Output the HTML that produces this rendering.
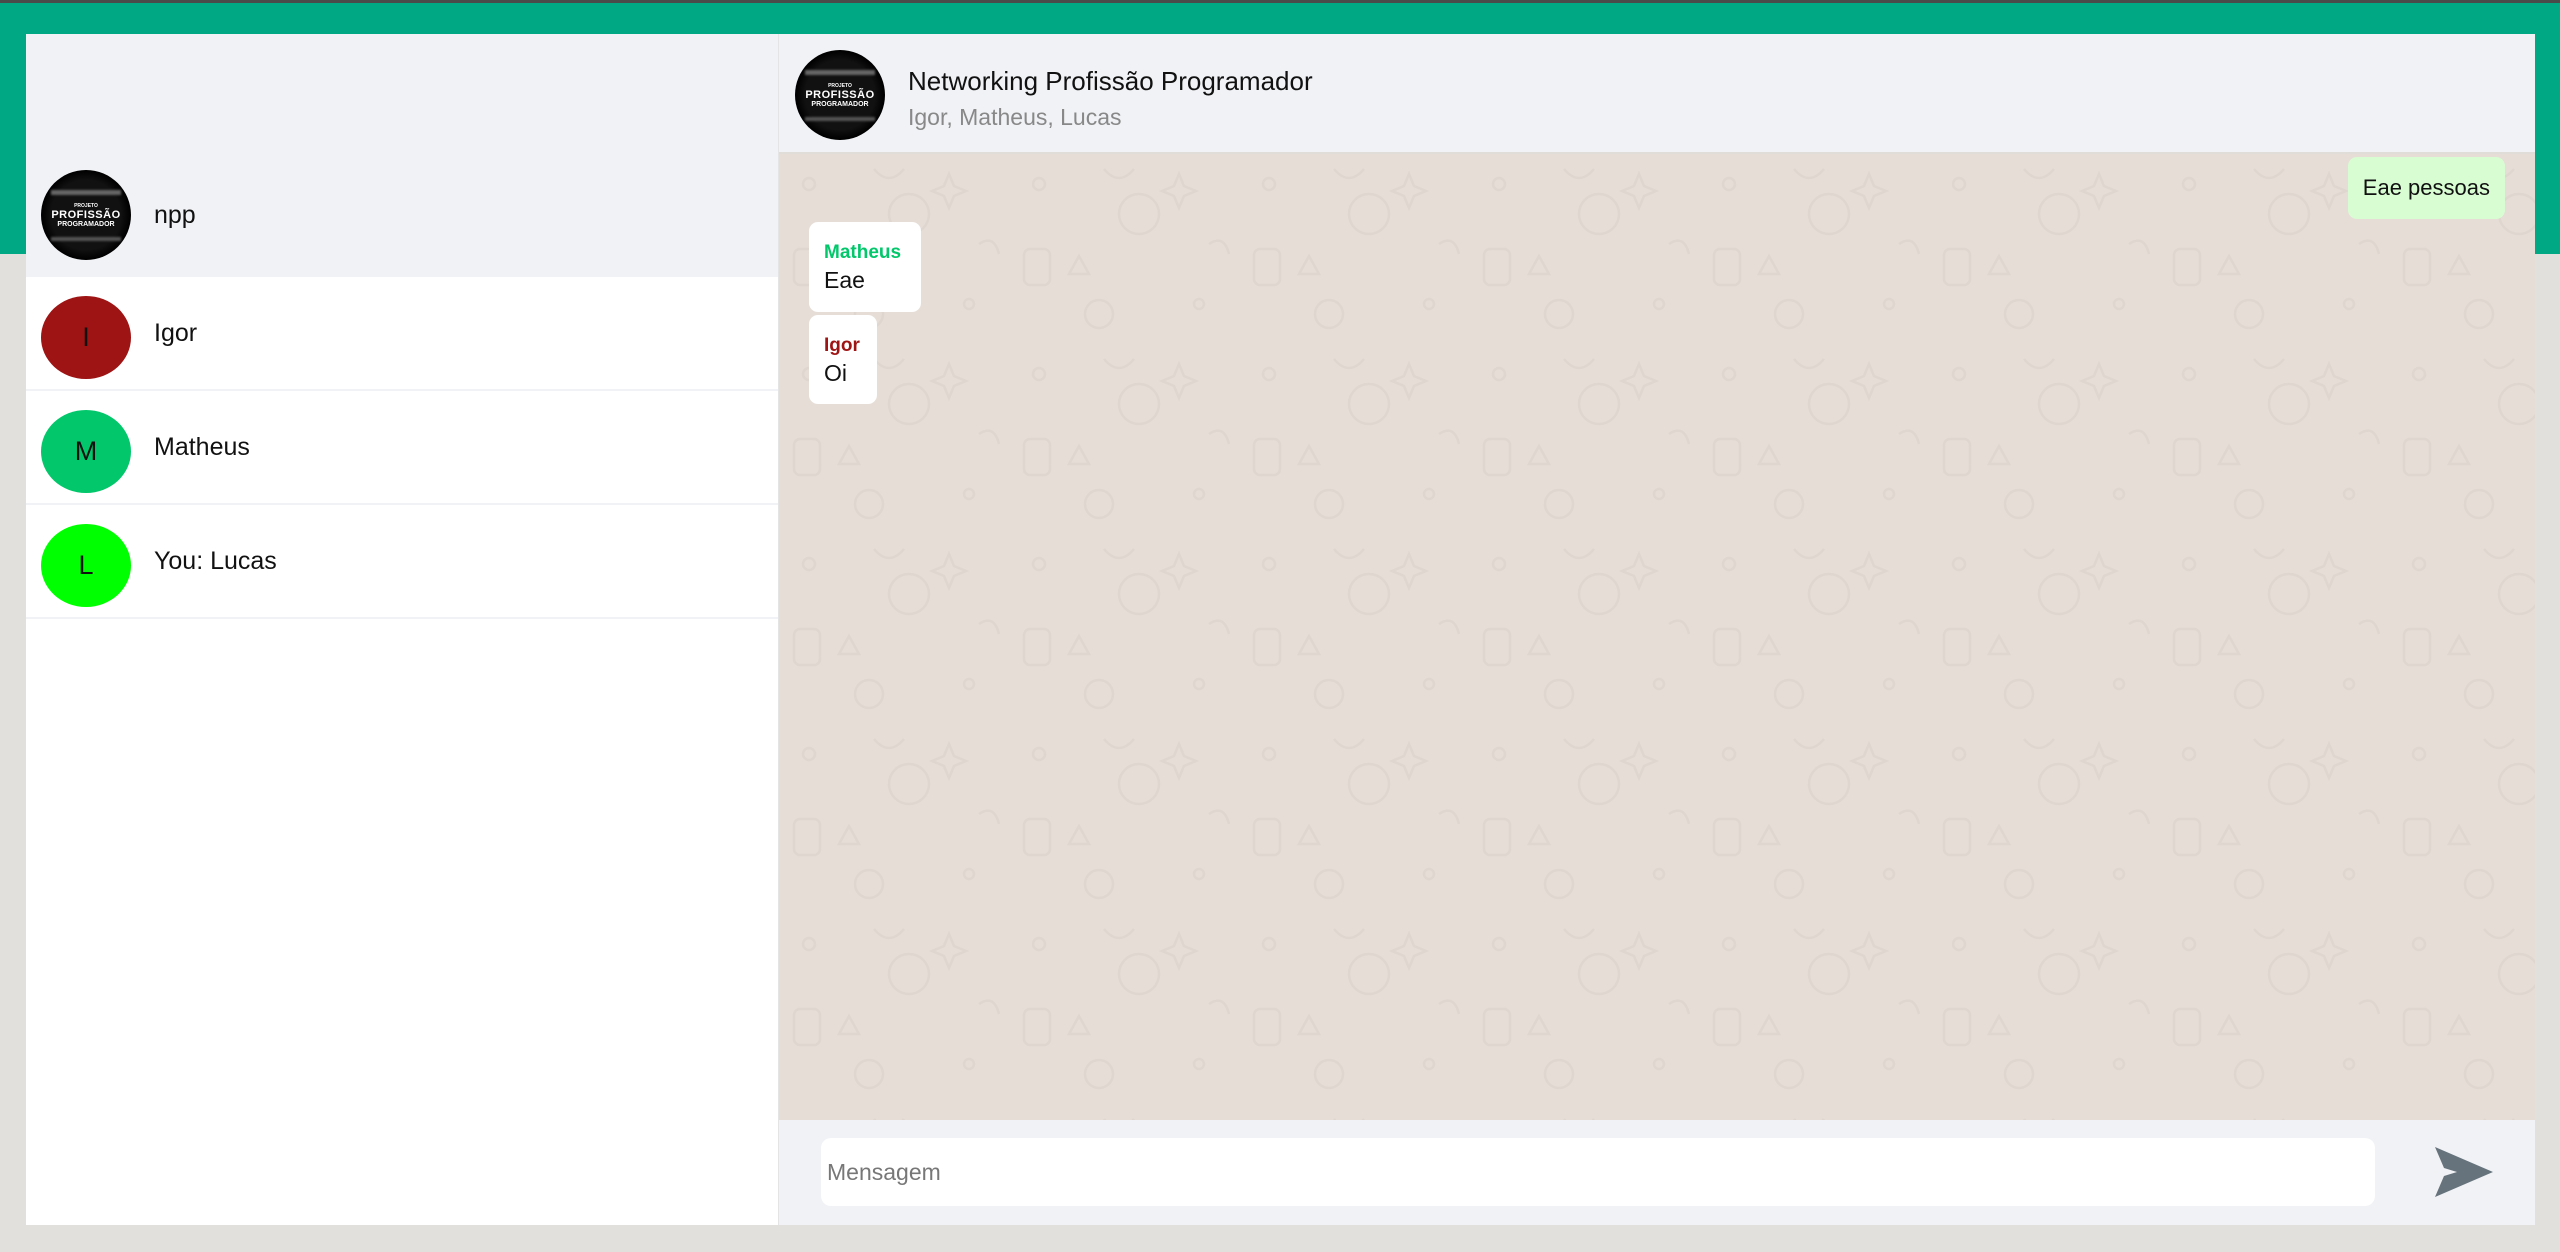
<!DOCTYPE html>
<html><head><meta charset="utf-8"><style>
*{margin:0;padding:0;box-sizing:border-box}
body{width:2560px;height:1252px;background:#e1e0dc;position:relative;overflow:hidden;font-family:"Liberation Sans",sans-serif}
.topline{position:absolute;left:0;top:0;width:2560px;height:3px;background:#4a4a4a}
.green{position:absolute;left:0;top:3px;width:2560px;height:251px;background:#00a884}
.app{position:absolute;left:26px;top:34px;width:2509px;height:1191px;background:#fff;display:flex}
.side{width:753px;height:100%;background:#fff;border-right:1px solid #e4e4e4;flex:none}
.sidehead{height:243px;background:#f0f2f5;position:relative}
.row{height:114px;border-bottom:2px solid #f0f2f5;position:relative}
.av{position:absolute;left:15px;top:19px;width:90px;height:83px;border-radius:50%;font-size:27px;color:#111;display:flex;align-items:center;justify-content:center}
.name{position:absolute;left:128px;top:0;line-height:112px;font-size:25px;color:#111}
.logo{background:radial-gradient(circle,#111 55%,#000 70%);border-radius:50%;display:flex;flex-direction:column;align-items:center;justify-content:center;color:#fff;font-weight:bold;overflow:hidden}
.chat{flex:1;position:relative;height:100%;overflow:hidden}
.chead{height:120px;background:#f0f2f5;border-bottom:2px solid #e0dcd8;position:relative}
.body{position:absolute;top:120px;left:0;right:0;height:966px;background:#e5ddd6;overflow:hidden}
.foot{position:absolute;top:1086px;left:0;right:0;height:105px;background:#f0f2f5}
.bub{position:absolute;background:#fff;border-radius:9px;padding:0 15px}
</style></head><body>
<div class="topline"></div><div class="green"></div>
<div class="app">
 <div class="side">
  <div class="sidehead">
   <div class="logo" style="position:absolute;left:15px;top:136px;width:90px;height:90px">
     <div style="width:70px;height:5px;background:#666;margin-bottom:8px;filter:blur(1px)"></div>
     <div style="font-size:5px">PROJETO</div><div style="font-size:11px;letter-spacing:.5px">PROFISSÃO</div><div style="font-size:7px">PROGRAMADOR</div>
     <div style="width:70px;height:4px;background:#555;margin-top:9px;filter:blur(1px)"></div>
   </div>
   <div class="name" style="top:151px;line-height:60px">npp</div>
  </div>
  <div class="row"><div class="av" style="background:#9e1313">I</div><div class="name">Igor</div></div>
  <div class="row"><div class="av" style="background:#03c76b">M</div><div class="name">Matheus</div></div>
  <div class="row"><div class="av" style="background:#00ff00">L</div><div class="name">You: Lucas</div></div>
 </div>
 <div class="chat">
  <div class="chead">
   <div class="logo" style="position:absolute;left:16px;top:16px;width:90px;height:90px">
     <div style="width:70px;height:5px;background:#666;margin-bottom:8px;filter:blur(1px)"></div>
     <div style="font-size:5px">PROJETO</div><div style="font-size:11px;letter-spacing:.5px">PROFISSÃO</div><div style="font-size:7px">PROGRAMADOR</div>
     <div style="width:70px;height:4px;background:#555;margin-top:9px;filter:blur(1px)"></div>
   </div>
   <div style="position:absolute;left:129px;top:32px;font-size:26px;color:#111">Networking Profissão Programador</div>
   <div style="position:absolute;left:129px;top:70px;font-size:23px;color:#888">Igor, Matheus, Lucas</div>
  </div>
  <div class="body">
   <svg width="100%" height="966" style="position:absolute;left:0;top:0">
    <defs><pattern id="p" width="230" height="190" patternUnits="userSpaceOnUse">
     <g fill="none" stroke="#dfd6cf" stroke-width="2.5">
      <circle cx="30" cy="30" r="6"/><circle cx="130" cy="60" r="20"/><path d="M60 120 l10 -18 l10 18 z"/><circle cx="190" cy="150" r="5"/><rect x="15" y="95" width="26" height="36" rx="6"/><path d="M95 15 q15 18 30 0"/><path d="M170 20 l5 12 l12 5 l-12 5 l-5 12 l-5 -12 l-12 -5 l12 -5 z"/><circle cx="90" cy="160" r="14"/><path d="M200 90 q15 -10 20 10"/>
     </g></pattern></defs>
    <rect width="100%" height="966" fill="url(#p)"/>
   </svg>
   <div class="bub" style="right:30px;top:3px;height:62px;background:#d9fdd3;line-height:62px;font-size:22px;color:#111">Eae pessoas</div>
   <div class="bub" style="left:30px;top:68px;width:112px;height:90px"><div style="font-size:19px;color:#03c76b;font-weight:bold;margin-top:20px">Matheus</div><div style="font-size:23px;color:#111;margin-top:3px">Eae</div></div>
   <div class="bub" style="left:30px;top:161px;width:68px;height:89px"><div style="font-size:19px;color:#9e1313;font-weight:bold;margin-top:20px">Igor</div><div style="font-size:23px;color:#111;margin-top:3px">Oi</div></div>
  </div>
  <div class="foot">
   <div style="position:absolute;left:42px;top:18px;width:1554px;height:68px;background:#fff;border-radius:10px;font-size:23px;color:#777;line-height:68px;padding-left:6px">Mensagem</div>
   <svg style="position:absolute;left:1653px;top:26px" width="62" height="54" viewBox="0 0 62 54"><path d="M3 1 L61 26 L3 51 L12 30 L25 26 L12 22 Z" fill="#66737c"/></svg>
  </div>
 </div>
</div>
</body></html>
